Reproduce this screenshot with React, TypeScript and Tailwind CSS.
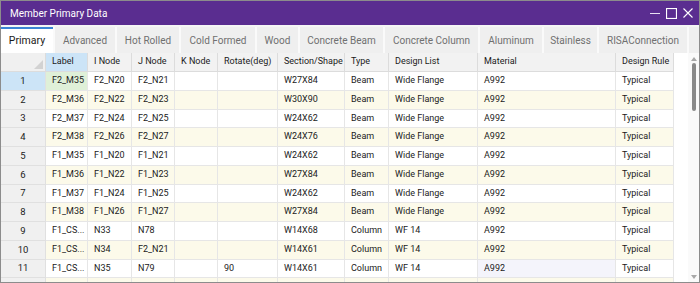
import React from 'react';

interface Column {
  key: string;
  title: string;
  width: string;
}

type Row = Record<string, string>;

const TABS = [
  { label: 'Primary', width: 'w-[52px]' },
  { label: 'Advanced', width: 'w-[62px]' },
  { label: 'Hot Rolled', width: 'w-[64px]' },
  { label: 'Cold Formed', width: 'w-[76px]' },
  { label: 'Wood', width: 'w-[43px]' },
  { label: 'Concrete Beam', width: 'w-[85px]' },
  { label: 'Concrete Column', width: 'w-[95px]' },
  { label: 'Aluminum', width: 'w-[64px]' },
  { label: 'Stainless', width: 'w-[55px]' },
  { label: 'RISAConnection', width: 'w-[90px]' },
];

const COLUMNS: Column[] = [
  { key: 'label', title: 'Label', width: 'w-[42px]' },
  { key: 'i', title: 'I Node', width: 'w-[44px]' },
  { key: 'j', title: 'J Node', width: 'w-[43px]' },
  { key: 'k', title: 'K Node', width: 'w-[43px]' },
  { key: 'rot', title: 'Rotate(deg)', width: 'w-[60px]' },
  { key: 'shape', title: 'Section/Shape', width: 'w-[67px]' },
  { key: 'type', title: 'Type', width: 'w-[44px]' },
  { key: 'list', title: 'Design List', width: 'w-[89px]' },
  { key: 'mat', title: 'Material', width: 'w-[138px]' },
  { key: 'rule', title: 'Design Rule', width: 'w-[58px]' },
];

const beam = (label: string, i: string, j: string, shape: string): Row => ({
  label, i, j, k: '', rot: '', shape, type: 'Beam', list: 'Wide Flange', mat: 'A992', rule: 'Typical',
});

const column = (i: string, j: string, rot: string, shape: string): Row => ({
  label: 'F1_CS...', i, j, k: '', rot, shape, type: 'Column', list: 'WF 14', mat: 'A992', rule: 'Typical',
});

const ROWS: Row[] = [
  beam('F2_M35', 'F2_N20', 'F2_N21', 'W27X84'),
  beam('F2_M36', 'F2_N22', 'F2_N23', 'W30X90'),
  beam('F2_M37', 'F2_N24', 'F2_N25', 'W24X62'),
  beam('F2_M38', 'F2_N26', 'F2_N27', 'W24X76'),
  beam('F1_M35', 'F1_N20', 'F1_N21', 'W24X62'),
  beam('F1_M36', 'F1_N22', 'F1_N23', 'W27X84'),
  beam('F1_M37', 'F1_N24', 'F1_N25', 'W24X62'),
  beam('F1_M38', 'F1_N26', 'F1_N27', 'W27X84'),
  column('N33', 'N78', '', 'W14X68'),
  column('N34', 'F2_N21', '', 'W14X61'),
  column('N35', 'N79', '90', 'W14X61'),
  { label: '', i: '', j: '', k: '', rot: '', shape: '', type: '', list: '', mat: '', rule: '' },
];

function WindowControls() {
  return (
    <div className="flex items-center gap-[6px] pr-[6px]">
      <svg width="10" height="10" viewBox="0 0 10 10">
        <line x1="0" y1="5.5" x2="10" y2="5.5" stroke="#e8e0f2" strokeWidth="1" />
      </svg>
      <svg width="11" height="11" viewBox="0 0 11 11">
        <rect x="0.5" y="0.5" width="10" height="10" fill="none" stroke="#ffffff" strokeWidth="1.2" />
      </svg>
      <svg width="10" height="10" viewBox="0 0 10 10">
        <path d="M0.5 0.5 L9.5 9.5 M9.5 0.5 L0.5 9.5" stroke="#ffffff" strokeWidth="1.1" />
      </svg>
    </div>
  );
}

export default function App() {
  return (
    <div className="w-[700px] h-[283px] flex flex-col border border-[#8c8c8c] bg-white overflow-hidden font-['Roboto','Noto_Sans',sans-serif] text-[#1b1b1b]">
      {/* Title bar */}
      <div className="h-[24px] shrink-0 flex items-center justify-between bg-[#5a2d90] pl-[9px]">
        <span className="text-[10px] text-white">Member Primary Data</span>
        <WindowControls />
      </div>

      {/* Tabs */}
      <div className="h-[28px] shrink-0 flex items-end bg-[#f5f5f5] pt-[2px]">
        {TABS.map((tab, idx) => (
          <div
            key={tab.label}
            className={`${tab.width} h-full shrink-0 flex items-center justify-center ${
              idx === 0
                ? 'bg-white text-[10.5px] text-[#1a1a1a] border-t-2 border-[#3c84d4]'
                : 'bg-[#efefef] text-[10px] text-[#707070] border-l-2 border-[#fafafa]'
            }`}
          >
            {tab.label}
          </div>
        ))}
        <div className="flex-1 h-full bg-[#efefef] border-l-2 border-[#fafafa]" />
      </div>

      {/* Grid + scrollbar */}
      <div className="flex flex-1 min-h-0">
        <div className="flex flex-col">
          {/* Header */}
          <div className="flex h-[19px] shrink-0">
            <div className="relative w-[45px] shrink-0 bg-[#f0f0f0] border-r border-b border-[#dcdcdc]">
              <svg className="absolute right-[2px] bottom-[2px]" width="9" height="9" viewBox="0 0 9 9">
                <polygon points="9,0 9,9 0,9" fill="#d2d2d2" />
              </svg>
            </div>
            {COLUMNS.map((col) => (
              <div
                key={col.key}
                className={`${col.width} shrink-0 flex items-center px-[6px] text-[9px] whitespace-nowrap overflow-hidden border-r border-b border-[#dcdcdc] ${
                  col.key === 'label' ? 'bg-[#cce4f7]' : 'bg-[#f2f2f2]'
                }`}
              >
                {col.title}
              </div>
            ))}
          </div>

          {/* Rows */}
          {ROWS.map((row, r) => {
            const rowBg = r % 2 === 1 ? 'bg-[#fcfaea]' : 'bg-white';
            return (
              <div key={r} className="flex h-[18.75px] shrink-0">
                <div
                  className={`w-[45px] shrink-0 flex items-center justify-center text-[9.5px] border-r border-b border-[#e0e0e0] ${
                    r === 0 ? 'bg-[#cce4f7]' : 'bg-[#f0f0f0]'
                  }`}
                >
                  {r < 11 ? r + 1 : ''}
                </div>
                {COLUMNS.map((col) => {
                  let bg = rowBg;
                  if (r === 0 && col.key === 'label') bg = 'bg-[#dff0d8]';
                  if (r === 10 && col.key === 'mat') bg = 'bg-[#f4f4fb]';
                  return (
                    <div
                      key={col.key}
                      className={`${col.width} ${bg} shrink-0 flex items-center px-[6px] text-[9px] whitespace-nowrap overflow-hidden border-r border-b border-[#e6e6e6]`}
                    >
                      {row[col.key]}
                    </div>
                  );
                })}
              </div>
            );
          })}
        </div>

        <div className="flex-1 bg-white" />

        {/* Scrollbar */}
        <div className="w-[11px] shrink-0 flex flex-col items-center bg-[#fafafa] pt-[4px] pb-[3px]">
          <svg width="6" height="4" viewBox="0 0 6 4">
            <polygon points="3,0 6,4 0,4" fill="#a8a8a8" />
          </svg>
          <div className="w-[4px] h-[48px] mt-[2px] rounded-full bg-[#8a8a8a]" />
          <div className="flex-1" />
          <svg width="6" height="4" viewBox="0 0 6 4">
            <polygon points="0,0 6,0 3,4" fill="#a8a8a8" />
          </svg>
        </div>
      </div>
    </div>
  );
}
